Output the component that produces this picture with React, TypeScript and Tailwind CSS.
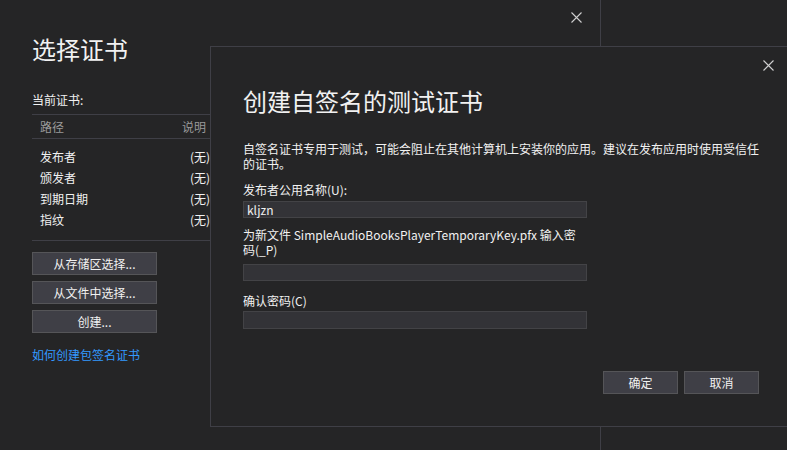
import React from "react";

const font = { fontFamily: '"Noto Sans CJK SC", "Noto Sans", sans-serif' };

const rows = [
  { label: "发布者", value: "(无)" },
  { label: "颁发者", value: "(无)" },
  { label: "到期日期", value: "(无)" },
  { label: "指纹", value: "(无)" },
];

function CloseIcon() {
  return (
    <svg width="11" height="11" viewBox="0 0 11 11" fill="none">
      <path d="M0.5 0.5L10.5 10.5M10.5 0.5L0.5 10.5" stroke="#d0d0d0" strokeWidth="1.1" />
    </svg>
  );
}

function DarkButton({ children, className = "" }: { children: React.ReactNode; className?: string }) {
  return (
    <button
      className={`h-[23px] border border-[#555558] bg-[#3f3f46] text-[12px] leading-none text-[#f1f1f1] ${className}`}
    >
      {children}
    </button>
  );
}

export default function App() {
  return (
    <div
      className="relative h-[450px] w-[787px] overflow-hidden bg-[#252526] text-[#f1f1f1] text-[12px]"
      style={font}
    >
      {/* outer dialog */}
      <div className="flex h-full w-[601px] flex-col border-r border-[#3f3f46] pl-[32px]">
        <div className="flex justify-end pr-[18px] pt-[12px]">
          <CloseIcon />
        </div>
        <h1 className="mt-[10px] text-[24px] leading-[32px] font-normal">选择证书</h1>
        <div className="mt-[27px] leading-[16px]">当前证书:</div>
        <div className="mt-[6px] mr-[-20px] border-y border-[#3f3f46] h-[25px] flex items-center text-[#9a9a9a]">
          <span className="w-[150px] pl-[8px]">路径</span>
          <span>说明</span>
        </div>
        <div className="flex flex-col pt-[7px] pb-[10px] border-b border-[#3f3f46]">
          {rows.map((r) => (
            <div key={r.label} className="flex h-[21px] items-center">
              <span className="w-[158px] pl-[8px]">{r.label}</span>
              <span>{r.value}</span>
            </div>
          ))}
        </div>
        <div className="mt-[11px] flex flex-col gap-[6px]">
          <DarkButton className="w-[125px]">从存储区选择...</DarkButton>
          <DarkButton className="w-[125px]">从文件中选择...</DarkButton>
          <DarkButton className="w-[125px]">创建...</DarkButton>
        </div>
        <div className="mt-[14px] text-[#3399ff] leading-[16px]">如何创建包签名证书</div>
      </div>

      {/* inner dialog */}
      <div className="absolute left-[210px] top-[46px] h-[381px] w-[620px] border border-[#3f3f46] bg-[#252526]">
        <div className="absolute left-[552px] top-[13px]">
          <CloseIcon />
        </div>
        <div className="flex flex-col pl-[32px]">
          <h2 className="mt-[38px] text-[24px] leading-[32px] font-normal">创建自签名的测试证书</h2>
          <p className="mt-[24px] w-[522px] leading-[15px]">
            自签名证书专用于测试，可能会阻止在其他计算机上安装你的应用。建议在发布应用时使用受信任的证书。
          </p>
          <div className="mt-[11px] leading-[16px]">发布者公用名称(U):</div>
          <div className="mt-[3px] flex h-[17px] w-[344px] items-center border border-[#434346] bg-[#333337] px-[3px]">
            kljzn
          </div>
          <div className="mt-[9px] w-[344px] leading-[15px]">
            为新文件 SimpleAudioBooksPlayerTemporaryKey.pfx 输入密码(_P)
          </div>
          <div className="mt-[7px] h-[17px] w-[344px] border border-[#434346] bg-[#333337]" />
          <div className="mt-[12px] leading-[16px]">确认密码(C)</div>
          <div className="mt-[2px] h-[18px] w-[344px] border border-[#434346] bg-[#333337]" />
          <div className="mt-[42px] flex gap-[6px] pl-[360px]">
            <DarkButton className="w-[75px]">确定</DarkButton>
            <DarkButton className="w-[75px]">取消</DarkButton>
          </div>
        </div>
      </div>
    </div>
  );
}
